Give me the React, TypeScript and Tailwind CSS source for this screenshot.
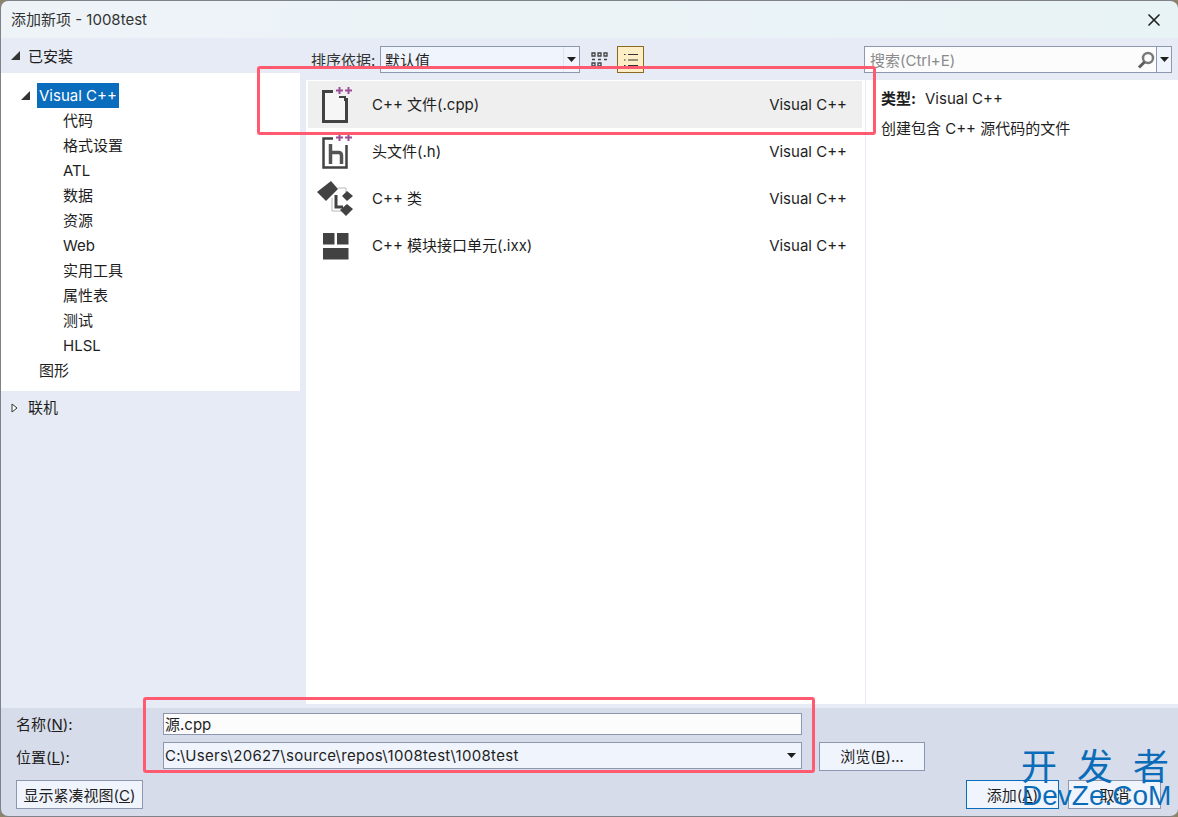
import { FiX } from "react-icons/fi";

const font = { fontFamily: 'Inter, "Noto Sans CJK SC", sans-serif' };

const treeItems = ["代码", "格式设置", "ATL", "数据", "资源", "Web", "实用工具", "属性表", "测试", "HLSL"];

const Caret = ({ className = "" }: { className?: string }) => (
  <svg width="9" height="5" viewBox="0 0 9 5" className={className}>
    <path d="M0 0h9L4.5 5z" fill="#1e1e1e" />
  </svg>
);

const Expanded = () => (
  <svg width="9" height="9" viewBox="0 0 9 9">
    <path d="M9 0v9H0z" fill="#333" />
  </svg>
);

const Plus = () => (
  <g fill="#9b4f96">
    <path d="M15 2.500h2.500V0h2v2.500H22v2h-2.500V7h-2V4.500H15z" />
    <path d="M24 2.500h2.500V0h2v2.500H31v2h-2.500V7h-2V4.500H24z" />
  </g>
);

const CppIcon = () => (
  <svg width="32" height="36" viewBox="0 0 32 36">
    <path d="M12 4.500H2.500v30h23V11" fill="#f6f6f6" stroke="#424242" strokeWidth="3" />
    <path d="M18 10h6v4" fill="none" stroke="#424242" strokeWidth="2" />
    <Plus />
  </svg>
);

const HeaderIcon = () => (
  <svg width="32" height="36" viewBox="0 0 32 36">
    <path d="M12 4.500H2.500v29h23V11" fill="none" stroke="#424242" strokeWidth="2.500" />
    <path d="M9.500 10v20M9.500 18.500h8c2 0 3 1 3 3V30" fill="none" stroke="#555" strokeWidth="3.500" />
    <Plus />
  </svg>
);

const ClassIcon = () => (
  <svg width="36" height="36" viewBox="0 0 36 36">
    <path d="M15 17v13h11M21 7h8v4" fill="none" stroke="#b8b8b8" strokeWidth="1" />
    <path d="M0 11L14 0l7 8L9 20z" fill="#424242" />
    <path d="M19 14v12h7" fill="none" stroke="#424242" strokeWidth="3" />
    <path d="M25 15l5-5 6 5-6 5z" fill="#424242" />
    <path d="M23 29l7-6 6 5-7 7z" fill="#424242" />
  </svg>
);

const ModuleIcon = () => (
  <svg width="26" height="28" viewBox="0 0 26 28">
    <path d="M0 1h11.500v11.500H0zM14 1h11.500v11.500H14zM0 16h25.500v11.500H0z" fill="#424242" />
  </svg>
);

const GridIcon = () => (
  <svg width="18" height="16" viewBox="0 0 18 16" fill="none" stroke="#424242" strokeWidth="1.300">
    <path d="M1 1h3v3H1zM7 1h3v3H7zM13 1h3v3h-3zM1 11h3v3H1zM7 11h3v3H7z" />
    <path d="M1 7.500h3M7 7.500h3M13 7.500h3" />
  </svg>
);

const ListIcon = () => (
  <svg width="16" height="14" viewBox="0 0 16 14" fill="none" stroke="#333" strokeWidth="1">
    <path d="M1 1.500h1.500M5 1.500h10M1 7h1.500M5 7h10M1 12.500h1.500M5 12.500h10" />
  </svg>
);

const SearchIcon = () => (
  <svg width="18" height="18" viewBox="0 0 18 18">
    <circle cx="11" cy="7" r="5" fill="none" stroke="#7a7a7a" strokeWidth="2.500" />
    <path d="M7.500 11L2 16.500" stroke="#5e5e5e" strokeWidth="3" />
  </svg>
);

const templates = [
  { name: "C++ 文件(.cpp)", icon: <CppIcon />, pad: "pl-[13px]", selected: true },
  { name: "头文件(.h)", icon: <HeaderIcon />, pad: "pl-[13px]" },
  { name: "C++ 类", icon: <ClassIcon />, pad: "pl-[9px]" },
  { name: "C++ 模块接口单元(.ixx)", icon: <ModuleIcon />, pad: "pl-[15px]" },
];

export default function App() {
  return (
    <div style={font} className="relative w-[1178px] h-[817px] overflow-hidden bg-[#8d8468] text-[15px] text-[#1e1e1e]">
      <div className="flex flex-col h-full rounded-t-lg rounded-b-lg overflow-hidden border-l border-b border-t border-[#7f8389]">
        <div className="h-[37px] shrink-0 flex items-center justify-between pl-[10px] pr-[14px] bg-gradient-to-r from-[#eef3f8] to-[#e8f3f6] text-[#333]">
          <span className="pt-[2px]">添加新项 - 1008test</span>
          <FiX className="text-[20px] text-[#222]" />
        </div>

        <div className="flex-1 min-h-0 flex bg-[#e6ebf5] pb-[4px]">
          <div className="w-[299px] shrink-0 flex flex-col">
            <div className="h-[35px] flex items-center gap-[8px] pl-[10px]">
              <Expanded />
              <span className="mt-[4px]">已安装</span>
            </div>
            <div className="bg-white h-[318px] pt-[10px]">
              <div className="h-[25px] flex items-center pl-[20px]">
                <Expanded />
                <span className="ml-[7px] px-[2px] pt-[2px] h-[25px] flex items-center bg-[#0a6cbc] text-white">Visual C++</span>
              </div>
              {treeItems.map((t) => (
                <div key={t} className="h-[25px] pt-[2px] flex items-center pl-[62px]">{t}</div>
              ))}
              <div className="h-[25px] pt-[2px] flex items-center pl-[38px]">图形</div>
            </div>
            <div className="flex items-center gap-[10px] pl-[10px] mt-[5px] h-[24px]">
              <svg width="7" height="10" viewBox="0 0 7 10">
                <path d="M1 1l5 4-5 4z" fill="#fff" stroke="#333" />
              </svg>
              <span>联机</span>
            </div>
          </div>

          <div className="flex-1 min-w-0 flex flex-col pl-[6px]">
            <div className="h-[42px] shrink-0 flex items-start pt-[8px] pl-[5px]">
              <span className="h-[30px] w-[69px] flex items-center text-[#333]">排序依据:</span>
              <div className="w-[200px] h-[27px] flex border border-[#8e97b0] bg-[#f0f4fc]">
                <span className="flex-1 flex items-center pl-[4px] pt-[4px]">默认值</span>
                <span className="w-[16px] flex items-center justify-center border-l border-[#dfe3ee]"><Caret /></span>
              </div>
              <div className="w-[37px] h-[27px] flex items-center justify-center pl-[2px]"><GridIcon /></div>
              <div className="w-[27px] h-[27px] flex items-center justify-center bg-[#fdeec5] border border-[#8a6a1e]"><ListIcon /></div>
              <div className="ml-auto mr-[6px] w-[308px] h-[27px] flex border border-[#8e97b0] bg-[#fcfcfd]">
                <span className="flex-1 flex items-center pl-[5px] pt-[4px] text-[#8a8a8a]">搜索(Ctrl+E)</span>
                <span className="w-[20px] flex items-center justify-center"><SearchIcon /></span>
                <span className="w-[15px] flex items-center justify-center border-l border-[#8e97b0] bg-[#f0f4fc]"><Caret /></span>
              </div>
            </div>

            <div className="flex-1 min-h-0 flex bg-white">
              <div className="w-[559px] shrink-0 pt-[1px] pl-[2px] pr-[3px]">
                {templates.map((t) => (
                  <div key={t.name} className={"h-[47px] flex items-center " + (t.selected ? "bg-[#efefef]" : "")}>
                    <div className={"w-[64px] shrink-0 flex items-center " + t.pad}>{t.icon}</div>
                    <span className="flex-1 pt-[2px]">{t.name}</span>
                    <span className="pr-[15px] pt-[2px]">Visual C++</span>
                  </div>
                ))}
              </div>
              <div className="flex-1 border-l border-[#e6ebf5] pl-[15px] pt-[7px]">
                <div className="h-[24px] flex items-center">
                  <b className="font-bold mr-[9px]">类型:</b>
                  <span>Visual C++</span>
                </div>
                <div className="h-[24px] mt-[6px] flex items-center">创建包含 C++ 源代码的文件</div>
              </div>
            </div>
          </div>
        </div>

        <div className="h-[108px] shrink-0 bg-[#d6dce9] flex flex-col pt-[5px] pl-[15px] pr-[17px]">
          <div className="flex items-center h-[22px]">
            <span className="w-[147px] pt-[2px]">名称(<u>N</u>):</span>
            <div className="w-[639px] h-[22px] border border-[#8e97b0] bg-[#fcfcfd] flex items-center pl-[1px] pt-[2px]">源.cpp</div>
          </div>
          <div className="flex items-start mt-[7px] h-[29px]">
            <span className="w-[147px] h-[30px] pt-[2px] flex items-center">位置(<u>L</u>):</span>
            <div className="w-[639px] h-[27px] border border-[#8e97b0] bg-[#f0f4fc] flex items-center justify-between pl-[1px] pr-[5px]">
              <span className="pt-[2px] tracking-[0.3px]">C:\Users\20627\source\repos\1008test\1008test</span>
              <Caret />
            </div>
            <button className="ml-[17px] w-[106px] h-[29px] pt-[2px] border border-[#8e97b0] bg-[#f0f4fc]">浏览(<u>B</u>)...</button>
          </div>
          <div className="flex items-center mt-[9px] h-[29px]">
            <button className="w-[127px] h-[29px] pt-[3px] border border-[#8e97b0] bg-[#f0f4fc]">显示紧凑视图(<u>C</u>)</button>
            <button className="ml-auto w-[93px] h-[29px] pt-[3px] border border-[#0a6cbc] bg-[#f0f4fc]">添加(<u>A</u>)</button>
            <button className="ml-[9px] w-[93px] h-[29px] pt-[3px] border border-[#8e97b0] bg-[#f0f4fc]">取消</button>
          </div>
        </div>
      </div>

      {/* red annotation boxes drawn over the screenshot */}
      <div className="absolute left-[257px] top-[66px] w-[619px] h-[69px] border-[3px] border-[#ff5a70] rounded-[3px]" />
      <div className="absolute left-[143px] top-[697px] w-[672px] h-[76px] border-[3px] border-[#ff5a70] rounded-[3px]" />

      {/* watermark */}
      <div className="absolute left-[1021px] top-[744px] w-[148px] flex justify-between text-[36px] leading-[46px] text-[#0a6cb8]">
        <span>开</span>
        <span>发</span>
        <span>者</span>
      </div>
      <div className="absolute left-[1022px] top-[778px] text-[28px] leading-[36px] text-[#0a6cb8]" style={{ fontFamily: '"Liberation Sans", sans-serif' }}>
        DevZe.CoM
      </div>
    </div>
  );
}
